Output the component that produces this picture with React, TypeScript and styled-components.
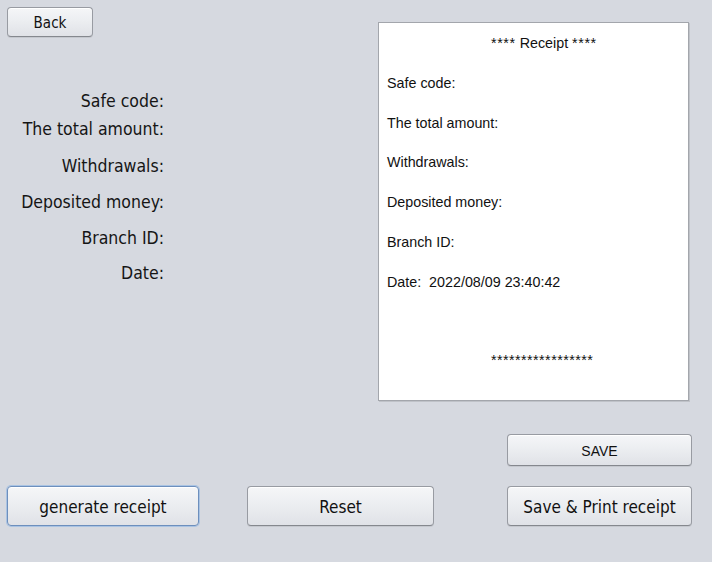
import React from "react";
import styled, { createGlobalStyle, css } from "styled-components";

const Global = createGlobalStyle`
  html, body { margin: 0; padding: 0; background: #d6d9e0; }
  body { width: 712px; height: 562px; overflow: hidden; }
`;

const Page = styled.div`
  width: 712px;
  height: 562px;
  box-sizing: border-box;
  padding: 7px 20px 0 7px;
  background: #d6d9e0;
  font-family: "DejaVu Sans Condensed", "DejaVu Sans", sans-serif;
  color: #151515;
  display: flex;
  flex-direction: column;
`;

const Top = styled.div`
  display: flex;
  align-items: flex-start;
`;

const LeftCol = styled.div`
  width: 157px;
  display: flex;
  flex-direction: column;
  align-items: flex-start;
`;

const Button = styled.button<{ $w: number; $h: number; $focus?: boolean; $arial?: boolean; $size?: number }>`
  width: ${(p) => p.$w}px;
  height: ${(p) => p.$h}px;
  box-sizing: border-box;
  border-radius: 4px;
  border: 1px solid #989ba2;
  border-bottom-color: #85888e;
  background: linear-gradient(#f5f6f8 0%, #eceef1 45%, #e0e2e7 100%);
  box-shadow: inset 0 1px 0 #ffffff, 0 1px 0 rgba(0, 0, 0, 0.08);
  font-family: ${(p) =>
    p.$arial ? `"Liberation Sans", Arial, sans-serif` : `"DejaVu Sans Condensed", "DejaVu Sans", sans-serif`};
  font-size: ${(p) => p.$size ?? 17}px;
  color: #111;
  padding: 2px 0 0 0;
  display: flex;
  align-items: center;
  justify-content: center;
  ${(p) =>
    p.$focus &&
    css`
      border: 1px solid #6d8fbd;
      box-shadow: 0 0 0 1px #a9c3e3, inset 0 1px 0 #ffffff;
    `}
`;

const Labels = styled.div`
  margin-top: 54px;
  width: 157px;
  display: flex;
  flex-direction: column;
  align-items: flex-end;
`;

const Label = styled.div<{ $gap: number }>`
  margin-top: ${(p) => p.$gap}px;
  height: 20px;
  line-height: 20px;
  font-size: 17.5px;
  white-space: nowrap;
`;

const Receipt = styled.div`
  margin-left: 214px;
  margin-top: 15px;
  width: 311px;
  height: 379px;
  box-sizing: border-box;
  background: #ffffff;
  border: 1px solid #a3a6ac;
  box-shadow: 1px 1px 0 #bfc2c8;
  padding: 0 0 0 8px;
  font-family: "Liberation Sans", Arial, sans-serif;
  font-size: 14.3px;
  color: #111;
  display: flex;
  flex-direction: column;
`;

const Line = styled.div<{ $indent?: number }>`
  height: 39.8px;
  line-height: 40px;
  padding-left: ${(p) => p.$indent ?? 0}px;
  white-space: pre;
`;

const Star = styled.span`
  letter-spacing: 0.6px;
`;

const Stars = styled.div`
  margin-top: 38px;
  height: 40px;
  line-height: 40px;
  padding-left: 104px;
  white-space: pre;
  letter-spacing: 0.45px;
`;

const SaveRow = styled.div`
  margin-top: 33px;
  display: flex;
  justify-content: flex-end;
`;

const BottomRow = styled.div`
  margin-top: 20px;
  display: flex;
  align-items: center;
`;

const Spacer = styled.div<{ $w: number }>`
  width: ${(p) => p.$w}px;
  flex: none;
`;

const labels: [string, number][] = [
  ["Safe code:", 0],
  ["The total amount:", 8],
  ["Withdrawals:", 17],
  ["Deposited money:", 16],
  ["Branch ID:", 16],
  ["Date:", 15],
];

export default function App() {
  return (
    <>
      <Global />
      <Page>
        <Top>
          <LeftCol>
            <Button $w={86} $h={30} $size={15}>
              Back
            </Button>
            <Labels>
              {labels.map(([t, g]) => (
                <Label key={t} $gap={g}>
                  {t}
                </Label>
              ))}
            </Labels>
          </LeftCol>
          <Receipt>
            <Line $indent={104}>
              <Star>****</Star> Receipt <Star>****</Star>
            </Line>
            <Line>Safe code:</Line>
            <Line>The total amount:</Line>
            <Line>Withdrawals:</Line>
            <Line>Deposited money:</Line>
            <Line>Branch ID:</Line>
            <Line>Date:  2022/08/09 23:40:42</Line>
            <Stars>*****************</Stars>
          </Receipt>
        </Top>
        <SaveRow>
          <Button $w={185} $h={32} $arial $size={14}>
            SAVE
          </Button>
        </SaveRow>
        <BottomRow>
          <Button $w={192} $h={40} $focus>
            generate receipt
          </Button>
          <Spacer $w={48} />
          <Button $w={187} $h={40}>
            Reset
          </Button>
          <Spacer $w={73} />
          <Button $w={185} $h={40}>
            Save &amp; Print receipt
          </Button>
        </BottomRow>
      </Page>
    </>
  );
}
